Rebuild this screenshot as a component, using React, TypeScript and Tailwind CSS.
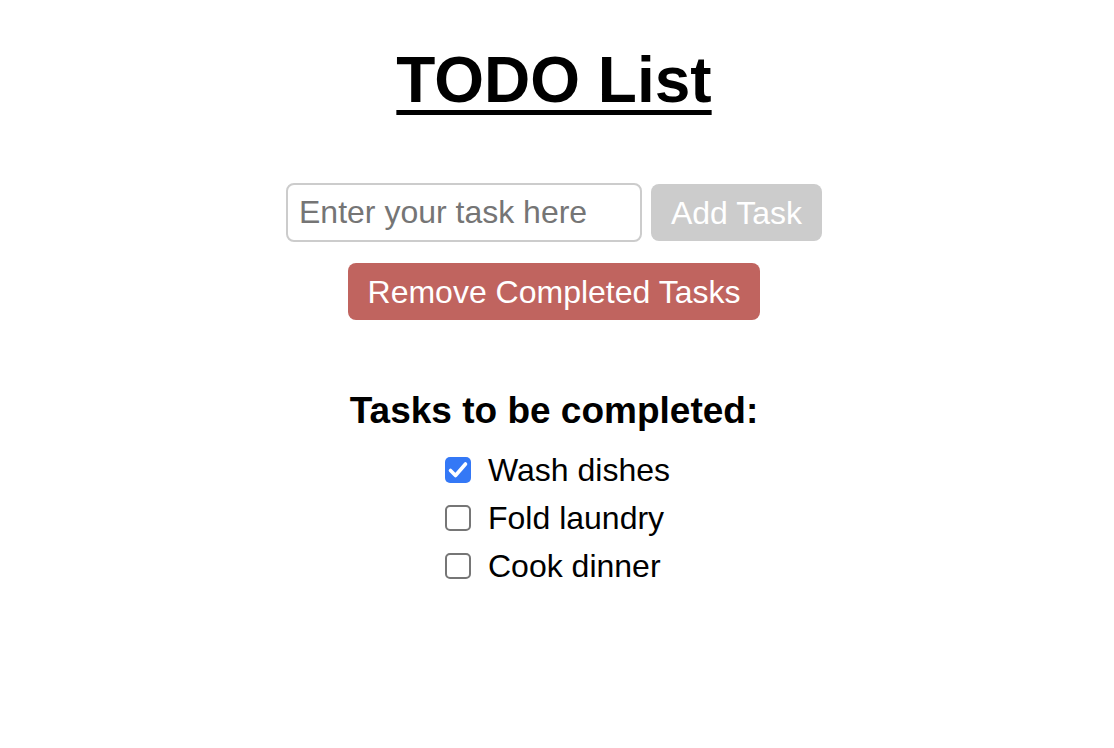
import React, { useState } from "react";

type Task = { id: number; text: string; done: boolean };

function Check({ checked, onClick }: { checked: boolean; onClick: () => void }): React.JSX.Element {
    return (
        <span
            onClick={onClick}
            className={
                checked
                    ? "w-[26px] h-[26px] rounded-[5px] bg-[#3478f6] flex items-center justify-center shrink-0"
                    : "w-[26px] h-[26px] rounded-[5px] border-2 border-[#767676] bg-white shrink-0"
            }
        >
            {checked && (
                <svg width="26" height="26" viewBox="0 0 26 26" fill="none">
                    <path d="M5.5 13.5 L10.5 18.5 L20.5 7" stroke="white" strokeWidth="3.6" strokeLinecap="round" strokeLinejoin="round" />
                </svg>
            )}
        </span>
    );
}

function App(): React.JSX.Element {
    const [tasks, setTasks] = useState<Task[]>([
        { id: 1, text: "Wash dishes", done: true },
        { id: 2, text: "Fold laundry", done: false },
        { id: 3, text: "Cook dinner", done: false },
    ]);
    const [input, setInput] = useState("");

    const toggle = (id: number) =>
        setTasks(tasks.map((t) => (t.id === id ? { ...t, done: !t.done } : t)));

    return (
        <div className="min-h-screen bg-white text-black font-['Liberation_Sans',Arial,sans-serif] flex flex-col items-center pt-[43px] pr-[6px]">
            <h1 className="text-[64px] leading-[74px] font-bold underline decoration-[5px] underline-offset-[8px]">
                TODO List
            </h1>
            <div className="mt-[66px] flex items-center gap-[9px]">
                <input
                    value={input}
                    onChange={(e) => setInput(e.target.value)}
                    placeholder="Enter your task here"
                    className="w-[356px] h-[59px] border-2 border-[#cccccc] rounded-[8px] px-[11px] text-[32px] outline-none placeholder:text-[#757575]"
                />
                <button
                    disabled={!input}
                    className="w-[171px] h-[57px] rounded-[8px] bg-[#cccccc] text-white text-[32px]"
                >
                    Add Task
                </button>
            </div>
            <button
                onClick={() => setTasks(tasks.filter((t) => !t.done))}
                className="mt-[21px] w-[412px] h-[57px] rounded-[8px] bg-[#c0645f] text-white text-[32px]"
            >
                Remove Completed Tasks
            </button>
            <h3 className="mt-[69px] text-[37px] leading-[43px] font-bold">Tasks to be completed:</h3>
            <ul className="mt-[14px] ml-[7px] flex flex-col">
                {tasks.map((t) => (
                    <li key={t.id} className="h-[48px] flex items-center gap-[17px]">
                        <Check checked={t.done} onClick={() => toggle(t.id)} />
                        <span className="text-[32px] leading-[48px]">{t.text}</span>
                    </li>
                ))}
            </ul>
        </div>
    );
}

export default App;
